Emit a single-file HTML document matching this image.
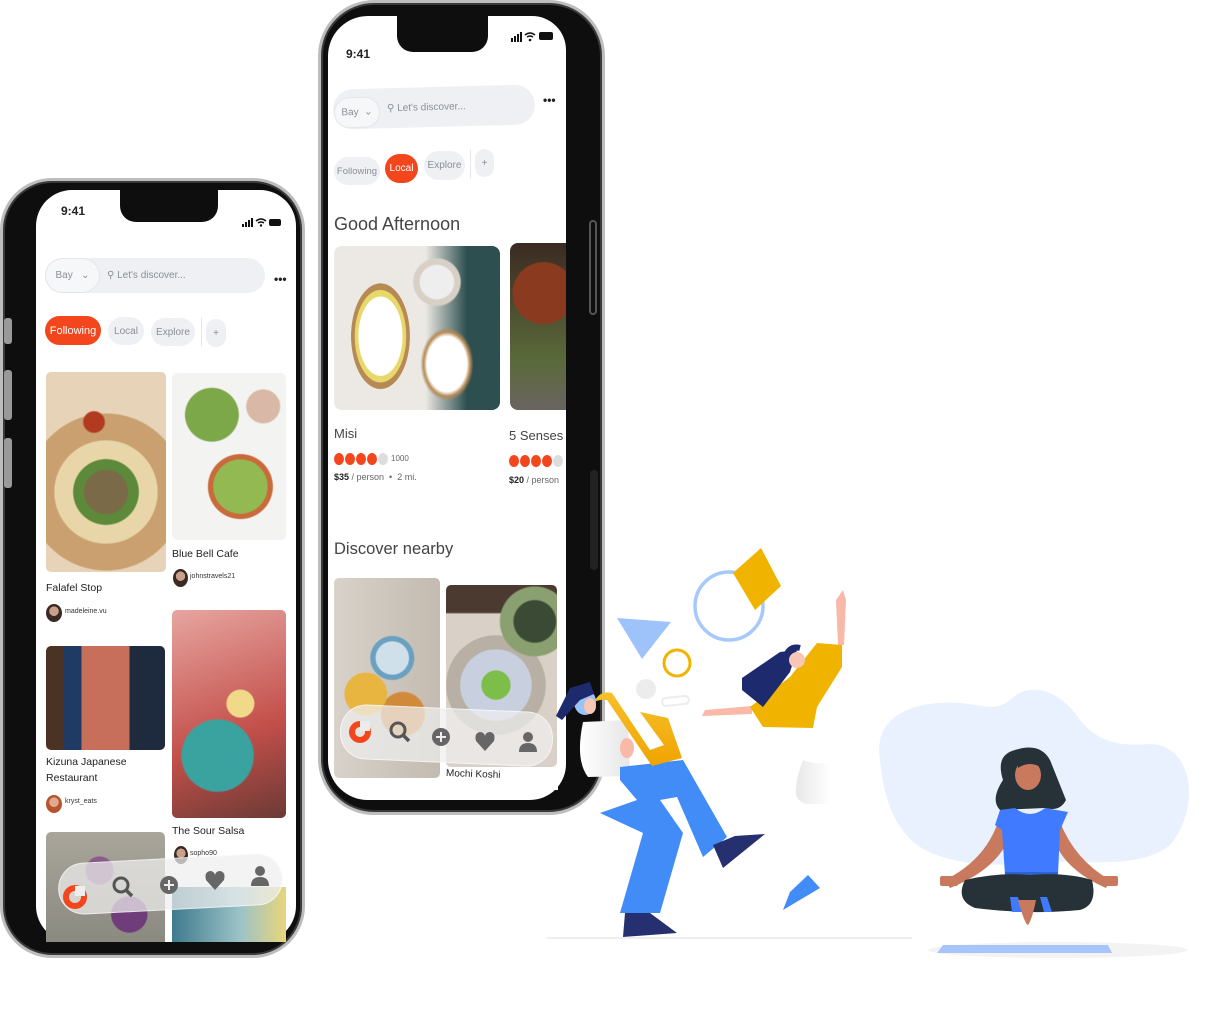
<!DOCTYPE html>
<html><head><meta charset="utf-8">
<style>
*{margin:0;padding:0;box-sizing:border-box}
body{width:1232px;height:1020px;background:#fff;position:relative;overflow:hidden;font-family:"Liberation Sans",sans-serif;color:#222}
.a{position:absolute}
.frame{background:#0e0e0e;border:3px solid #bdbdbd;box-shadow:inset 0 0 0 2px #3a3a3a}
.screen{background:#fff;overflow:hidden}
.pill{border-radius:20px;background:#eef0f3;color:#8a8f99;font-size:10px;display:flex;align-items:center;justify-content:center}
.or{background:#f4461d;color:#fff}
.t{font-size:10.5px;color:#222;white-space:nowrap}
.u{font-size:7px;color:#333;white-space:nowrap}
.av{border-radius:50%;background:radial-gradient(circle at 50% 40%,#c9a08a 0 35%,#3b2a24 36%)}
.img{border-radius:5px}
.nav{border-radius:26px;background:rgba(238,238,238,.72);border:1px solid rgba(255,255,255,.6)}
</style></head><body>

<!-- LEFT PHONE -->
<div class="a frame" style="left:0;top:178px;width:305px;height:780px;border-radius:52px"></div>
<div class="a" style="left:4px;top:318px;width:8px;height:26px;background:#999;border-radius:3px"></div>
<div class="a" style="left:4px;top:370px;width:8px;height:50px;background:#999;border-radius:3px"></div>
<div class="a" style="left:4px;top:438px;width:8px;height:50px;background:#999;border-radius:3px"></div>
<div class="a screen" style="left:36px;top:190px;width:260px;height:752px;border-radius:36px"></div>
<div class="a" style="left:120px;top:188px;width:98px;height:34px;background:#0e0e0e;border-radius:0 0 16px 16px"></div>
<div class="a" style="left:61px;top:204px;font-size:12px;font-weight:bold">9:41</div>
<div class="a" style="left:242px;top:214px;width:40px;height:9px">
 <svg width="40" height="9"><rect x="0" y="6" width="2" height="3" fill="#111"/><rect x="3" y="4" width="2" height="5" fill="#111"/><rect x="6" y="2" width="2" height="7" fill="#111"/><rect x="9" y="0" width="2" height="9" fill="#111"/><path d="M14 3 Q19 -1 24 3 M16 5 Q19 3 22 5" stroke="#111" stroke-width="1.5" fill="none"/><circle cx="19" cy="7.5" r="1.2" fill="#111"/><rect x="27" y="1" width="12" height="7" rx="2" fill="#111"/></svg>
</div>
<div class="a pill" style="left:45px;top:258px;width:220px;height:35px;justify-content:flex-start;padding-left:62px">⚲ Let's discover...</div>
<div class="a pill" style="left:45px;top:258px;width:55px;height:35px;background:#f6f7f9;border:1px solid #e3e5ea">Bay &nbsp;&nbsp;⌄</div>
<div class="a" style="left:274px;top:272px;font-size:12px;font-weight:bold">•••</div>
<div class="a pill or" style="left:45px;top:316px;width:56px;height:29px;font-size:11px">Following</div>
<div class="a pill" style="left:108px;top:317px;width:36px;height:28px">Local</div>
<div class="a pill" style="left:151px;top:318px;width:44px;height:28px">Explore</div>
<div class="a" style="left:201px;top:318px;width:1px;height:28px;background:#e5e5e5"></div>
<div class="a pill" style="left:206px;top:319px;width:20px;height:28px">+</div>

<div class="a img" style="left:46px;top:372px;width:120px;height:200px;background:radial-gradient(circle at 40% 25%,#b23a20 0 6%,transparent 7%),radial-gradient(circle at 50% 60%,#7a6a48 0 16%,#5d8a3a 17% 24%,#e8d6a8 25% 38%,#caa070 39% 58%,#e6d3b8 59%)"></div>
<div class="a img" style="left:172px;top:373px;width:114px;height:167px;background:radial-gradient(circle at 35% 25%,#7da84a 0 18%,transparent 19%),radial-gradient(circle at 60% 68%,#93b952 0 20%,#c96a3b 21% 24%,transparent 25%),radial-gradient(circle at 80% 20%,#d9b8a8 0 10%,transparent 11%),#f3f3f1"></div>
<div class="a t" style="left:46px;top:582px">Falafel Stop</div>
<div class="a av" style="left:46px;top:604px;width:16px;height:18px"></div>
<div class="a u" style="left:65px;top:608px">madeleine.vu</div>
<div class="a t" style="left:172px;top:548px">Blue Bell Cafe</div>
<div class="a av" style="left:173px;top:569px;width:15px;height:18px"></div>
<div class="a u" style="left:190px;top:573px">johnstravels21</div>

<div class="a img" style="left:46px;top:646px;width:119px;height:104px;background:linear-gradient(90deg,#4a3325 0 15%,#1f3b63 15% 30%,#c86f5c 30% 70%,#1e2b3f 70%)"></div>
<div class="a t" style="left:46px;top:756px">Kizuna Japanese</div>
<div class="a t" style="left:46px;top:772px">Restaurant</div>
<div class="a av" style="left:46px;top:795px;width:16px;height:18px;background:radial-gradient(circle at 50% 40%,#e0a88c 0 35%,#b8542d 36%)"></div>
<div class="a u" style="left:65px;top:798px">kryst_eats</div>

<div class="a img" style="left:172px;top:610px;width:114px;height:208px;background:radial-gradient(circle at 40% 70%,#3aa3a0 0 22%,transparent 23%),radial-gradient(circle at 60% 45%,#f1d98a 0 10%,transparent 11%),linear-gradient(160deg,#e7a5a0,#c34f4a 60%,#6b3a35)"></div>
<div class="a t" style="left:172px;top:825px">The Sour Salsa</div>
<div class="a av" style="left:174px;top:846px;width:14px;height:18px"></div>
<div class="a u" style="left:190px;top:850px">sopho90</div>

<div class="a" style="left:46px;top:832px;width:119px;height:110px;border-radius:5px 5px 0 0;background:radial-gradient(circle at 45% 35%,#8a5a8a 0 14%,transparent 15%),radial-gradient(circle at 70% 75%,#6f3d7a 0 15%,transparent 16%),linear-gradient(#a9a59b,#8b8a80)"></div>
<div class="a" style="left:172px;top:887px;width:114px;height:55px;background:linear-gradient(90deg,#3f7a8d,#9cc3c8 60%,#e8d57a)"></div>
<div class="a nav" style="left:58px;top:858px;width:225px;height:52px;transform:rotate(-3deg)"></div>
<svg class="a" style="left:55px;top:860px" width="230" height="60">
 <circle cx="20" cy="37" r="9" fill="none" stroke="#f4461d" stroke-width="6"/><rect x="20" y="26" width="10" height="10" fill="rgba(238,238,238,1)"/>
 <circle cx="66" cy="25" r="7" fill="none" stroke="#555" stroke-width="3"/><line x1="71" y1="30" x2="77" y2="36" stroke="#555" stroke-width="3.5"/>
 <circle cx="114" cy="25" r="9" fill="#666"/><path d="M114 20v10M109 25h10" stroke="#eee" stroke-width="2"/>
 <path d="M160 30 L151 20 Q149 12 155 11 Q159 11 160 15 Q161 11 165 11 Q171 12 169 20 Z" fill="#666"/>
 <circle cx="205" cy="11" r="5" fill="#666"/><path d="M196 26 Q196 17 205 17 Q214 17 214 26 Z" fill="#666"/>
</svg>

<!-- RIGHT PHONE -->
<div class="a frame" style="left:318px;top:0;width:287px;height:815px;border-radius:56px"></div>
<div class="a" style="left:589px;top:220px;width:8px;height:95px;border:2px solid #555;border-radius:4px"></div>
<div class="a" style="left:590px;top:470px;width:8px;height:100px;background:#222;border-radius:4px"></div>
<div class="a screen" style="left:328px;top:16px;width:238px;height:784px;border-radius:40px 34px 36px 40px"></div>
<div class="a" style="left:397px;top:12px;width:91px;height:40px;background:#0e0e0e;border-radius:0 0 16px 16px"></div>
<div class="a" style="left:346px;top:47px;font-size:12px;font-weight:bold">9:41</div>
<svg class="a" style="left:511px;top:31px" width="48" height="12"><rect x="0" y="7" width="2" height="4" fill="#111"/><rect x="3" y="5" width="2" height="6" fill="#111"/><rect x="6" y="3" width="2" height="8" fill="#111"/><rect x="9" y="1" width="2" height="10" fill="#111"/><path d="M14 4 Q19 0 24 4 M16 6 Q19 4 22 6" stroke="#111" stroke-width="1.5" fill="none"/><circle cx="19" cy="9" r="1.3" fill="#111"/><rect x="28" y="1" width="14" height="8" rx="2" fill="#111"/></svg>
<div class="a pill" style="left:333px;top:87px;width:202px;height:40px;justify-content:flex-start;padding-left:54px;transform:rotate(-1.5deg)">⚲ Let's discover...</div>
<div class="a pill" style="left:334px;top:97px;width:46px;height:31px;background:#f6f7f9;border:1px solid #e3e5ea;transform:rotate(-1.5deg)">Bay &nbsp;⌄</div>
<div class="a" style="left:543px;top:93px;font-size:12px;font-weight:bold">•••</div>
<div class="a pill" style="left:334px;top:157px;width:46px;height:28px;font-size:9.5px">Following</div>
<div class="a pill or" style="left:385px;top:154px;width:33px;height:29px">Local</div>
<div class="a pill" style="left:424px;top:151px;width:41px;height:29px">Explore</div>
<div class="a" style="left:470px;top:150px;width:1px;height:28px;background:#e5e5e5"></div>
<div class="a pill" style="left:475px;top:149px;width:19px;height:28px">+</div>
<div class="a" style="left:334px;top:214px;font-size:18px;color:#444">Good Afternoon</div>
<div class="a img" style="left:334px;top:246px;width:166px;height:164px;border-radius:8px;background:radial-gradient(circle at 62% 22%,#eee 0 10%,#d8d0c6 11% 14%,transparent 15%),radial-gradient(ellipse 22% 40% at 28% 55%,#fff 0 60%,#e8d86a 61% 70%,#b58a55 71% 80%,transparent 81%),radial-gradient(ellipse 20% 28% at 68% 72%,#fff 0 60%,#b58a55 70%,transparent 80%),linear-gradient(90deg,#ece9e4 0 55%,#2e4f50 80%)"></div>
<div class="a img" style="left:510px;top:243px;width:56px;height:167px;border-radius:8px 0 0 8px;background:radial-gradient(circle at 60% 30%,#8a3a1e 0 25%,transparent 26%),linear-gradient(#3b2a22,#5a6a3a 70%,#6a6460)"></div>
<div class="a" style="left:334px;top:426px;font-size:13px;color:#444">Misi</div>
<svg class="a" style="left:334px;top:452px" width="60" height="14"><g fill="#f4461d"><ellipse cx="5" cy="7" rx="5" ry="6"/><ellipse cx="16" cy="7" rx="5" ry="6"/><ellipse cx="27" cy="7" rx="5" ry="6"/><ellipse cx="38" cy="7" rx="5" ry="6"/></g><ellipse cx="49" cy="7" rx="5" ry="6" fill="#ddd"/></svg>
<div class="a" style="left:391px;top:454px;font-size:8px;color:#666">1000</div>
<div class="a" style="left:334px;top:472px;font-size:9px;color:#666"><b style="color:#222">$35</b> / person &nbsp;•&nbsp; 2 mi.</div>
<div class="a" style="left:509px;top:428px;font-size:13px;color:#444">5 Senses</div>
<svg class="a" style="left:509px;top:454px" width="57" height="14"><g fill="#f4461d"><ellipse cx="5" cy="7" rx="5" ry="6"/><ellipse cx="16" cy="7" rx="5" ry="6"/><ellipse cx="27" cy="7" rx="5" ry="6"/><ellipse cx="38" cy="7" rx="5" ry="6"/></g><ellipse cx="49" cy="7" rx="5" ry="6" fill="#ddd"/></svg>
<div class="a" style="left:509px;top:475px;font-size:9px;color:#666"><b style="color:#222">$20</b> / person</div>
<div class="a" style="left:334px;top:540px;font-size:16.5px;color:#444">Discover nearby</div>
<div class="a img" style="left:334px;top:578px;width:106px;height:200px;background:radial-gradient(circle at 55% 40%,#cfe0ea 0 12%,#6aa0c0 13% 16%,transparent 17%),radial-gradient(circle at 30% 58%,#e8b640 0 15%,transparent 16%),radial-gradient(circle at 65% 68%,#d08a3a 0 14%,transparent 15%),linear-gradient(90deg,#d8d2ca,#c3bbb0)"></div>
<div class="a img" style="left:446px;top:585px;width:111px;height:182px;background:radial-gradient(circle at 80% 20%,#3a4a34 0 12%,#8aa070 13% 20%,transparent 21%),radial-gradient(circle at 45% 55%,#7dbd4a 0 12%,#c8d0e0 13% 30%,#b8b0a4 31% 42%,transparent 43%),linear-gradient(#4a3a30 0 15%,#d9d0c8 16%)"></div>
<div class="a" style="left:446px;top:768px;width:112px;height:22px;background:#fff"></div>
<div class="a t" style="left:446px;top:769px;font-size:10px;transform:rotate(2deg)">Mochi Koshi</div>
<div class="a nav" style="left:340px;top:708px;width:213px;height:55px;transform:rotate(2.5deg)"></div>
<svg class="a" style="left:340px;top:705px" width="220" height="65">
 <circle cx="20" cy="27" r="8" fill="none" stroke="#f4461d" stroke-width="6"/><rect x="20" y="16" width="10" height="10" fill="#ececec"/>
 <circle cx="58" cy="25" r="7" fill="none" stroke="#555" stroke-width="3"/><line x1="63" y1="30" x2="69" y2="36" stroke="#555" stroke-width="3.5"/>
 <circle cx="101" cy="32" r="9" fill="#666"/><path d="M101 27v10M96 32h10" stroke="#eee" stroke-width="2"/>
 <path d="M145 46 L136 36 Q134 28 140 27 Q144 27 145 31 Q146 27 150 27 Q156 28 154 36 Z" fill="#666"/>
 <circle cx="188" cy="32" r="5" fill="#666"/><path d="M179 47 Q179 38 188 38 Q197 38 197 47 Z" fill="#666"/>
</svg>

<!-- ILLUSTRATION -->
<svg class="a" style="left:0;top:0" width="1232" height="1020">
 <defs>
  <linearGradient id="gw" x1="0" x2="1"><stop offset="0" stop-color="#fff"/><stop offset="1" stop-color="#e6e6e6"/></linearGradient>
  <linearGradient id="gg" x1="0" x2="1"><stop offset="0" stop-color="#e8e8e8"/><stop offset="1" stop-color="#fff"/></linearGradient>
  <linearGradient id="gs" x1="0" x2="0" y1="0" y2="1"><stop offset="0" stop-color="#f6c02a"/><stop offset="1" stop-color="#f0a400"/></linearGradient>
 </defs>
 <line x1="547" y1="938" x2="912" y2="938" stroke="#eee" stroke-width="2"/>
 <ellipse cx="1058" cy="950" rx="130" ry="8" fill="#f3f3f3"/>
 <polygon points="943,945 1108,945 1112,953 937,953" fill="#a8c5fb"/>
 <path d="M880 760 C872 712 920 700 960 703 C985 705 995 712 1010 700 C1030 680 1060 690 1080 720 C1100 745 1125 746 1150 744 C1195 745 1200 810 1170 845 C1140 870 1080 860 1050 862 C1010 866 960 868 925 850 C895 833 884 800 880 760 Z" fill="#eaf1fe"/>
 <!-- meditating woman -->
 <path d="M1003 780 Q995 755 1015 750 Q1040 742 1050 760 Q1058 780 1066 800 Q1060 812 1045 808 L1000 810 Q990 800 1003 780Z" fill="#263238"/>
 <ellipse cx="1028" cy="775" rx="13" ry="15" fill="#c97a5e"/>
 <path d="M1018 760 Q1030 748 1044 760 L1042 768 Q1030 760 1018 768Z" fill="#263238"/>
 <path d="M998 822 Q985 860 945 880 L950 888 Q995 870 1008 840Z M1060 822 Q1075 860 1110 880 L1106 888 Q1065 870 1054 840Z" fill="#c97a5e"/>
 <rect x="940" y="876" width="18" height="10" rx="2" fill="#c97a5e"/><rect x="1102" y="876" width="16" height="10" rx="2" fill="#c97a5e"/>
 <path d="M1000 810 L1015 808 Q1030 820 1045 808 L1068 812 L1060 830 L1058 875 L1005 875 L1002 830 L995 825Z" fill="#407bff"/>
 <rect x="1005" y="872" width="53" height="6" fill="#2f62cf"/>
 <path d="M965 880 Q1000 872 1030 875 Q1065 872 1092 880 Q1098 905 1080 910 Q1030 915 975 908 Q955 900 965 880Z" fill="#263238"/>
 <path d="M1010 897 L1018 897 L1022 912 L1012 912Z M1040 897 L1047 897 L1052 912 L1044 912Z" fill="#407bff"/>
 <path d="M1018 900 Q1025 925 1028 925 Q1032 920 1036 900 Z" fill="#c97a5e"/>
 <!-- floating shapes -->
 <polygon points="617,618 671,622 642,659" fill="#9ec3fb"/>
 <circle cx="729" cy="606" r="34" fill="none" stroke="#a6c8fb" stroke-width="3.5"/>
 <polygon points="733,573 761,548 781,586 755,610" fill="#f0b400"/>
 <circle cx="677" cy="663" r="13" fill="none" stroke="#f0b400" stroke-width="3"/>
 <circle cx="646" cy="689" r="10" fill="#ececec"/>
 <rect x="662" y="697" width="27" height="8" rx="4" fill="none" stroke="#ececec" stroke-width="2" transform="rotate(-6 675 701)"/>
 <polygon points="783,910 790,892 808,875 820,888" fill="#418cf7"/>
 <path d="M803 760 Q795 780 796 795 Q800 805 812 804 L830 804 L830 762 Q815 765 803 760Z" fill="url(#gg)"/>
 <!-- jumping woman -->
 <path d="M838 645 L836 600 L843 590 L846 600 L844 645Z" fill="#f8b9a8"/>
 <path d="M752 706 L705 710 L702 716 L752 714Z" fill="#f8b9a8"/>
 <polygon points="750,707 763,727 813,728 817,707 842,667 842,645 817,643 790,677" fill="#f0b400"/>
 <polygon points="780,652 797,650 790,672 763,707 742,690 742,678" fill="#1e2a6e"/>
 <circle cx="797" cy="660" r="8" fill="#f8c6b6"/>
 <path d="M785 660 Q788 645 800 648" stroke="#1e2a6e" stroke-width="6" fill="none"/>
 <!-- sax man -->
 <path d="M583 722 Q575 760 588 777 L630 776 L628 720Z" fill="url(#gw)"/>
 <path d="M620 767 L683 760 L727 837 L703 857 L677 797 L660 800 L683 833 L660 913 L620 913 L643 833 L600 813 L637 800 L620 780Z" fill="#418cf7"/>
 <polygon points="713,845 735,836 765,834 723,868" fill="#263070"/>
 <polygon points="625,913 650,913 677,933 623,937" fill="#263070"/>
 <path d="M594 702 Q600 690 612 693 L650 750 L664 745 L640 712 L668 718 L682 758 L652 766 L607 700 Q600 699 594 702Z" fill="url(#gs)"/>
 <ellipse cx="627" cy="748" rx="7" ry="10" fill="#f8b9a8"/>
 <ellipse cx="585" cy="702" rx="11" ry="13" fill="#9cc3f5"/>
 <ellipse cx="590" cy="706" rx="6" ry="8" fill="#f8c6b6"/>
 <polygon points="556,716 570,688 590,682 594,694 580,700 562,720" fill="#1e2a6e"/>
</svg>
</body></html>
